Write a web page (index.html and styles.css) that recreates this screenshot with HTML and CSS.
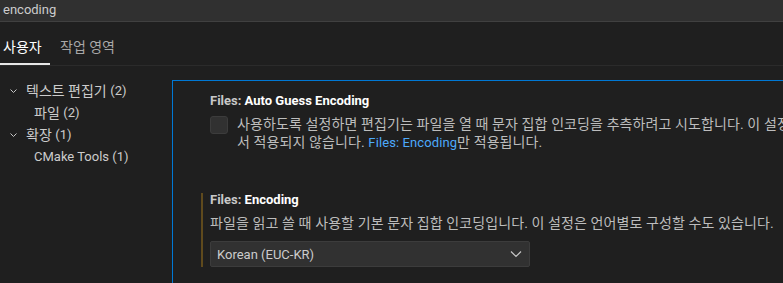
FILE: index.html
```html
<!DOCTYPE html>
<html>
<head>
  <meta charset="utf-8">
  <title>설정</title>
  <link rel="stylesheet" href="styles.css">
</head>
<body>
<div class="search">encoding</div>
<div class="tabs">
  <div class="tab active">사용자</div>
  <div class="tab">작업 영역</div>
</div>
<div class="main">
  <div class="toc">
    <div class="toc-row ko">
      <svg class="chev" width="8" height="6" viewBox="0 0 8 6"><polyline points="0.5,1.5 3.5,4.5 6.5,1.5"/></svg>
      텍스트 편집기&nbsp;<span class="latin">(2)</span>
    </div>
    <div class="toc-row child ko">파일&nbsp;<span class="latin">(2)</span></div>
    <div class="toc-row ko">
      <svg class="chev" width="8" height="6" viewBox="0 0 8 6"><polyline points="0.5,1.5 3.5,4.5 6.5,1.5"/></svg>
      확장&nbsp;<span class="latin">(1)</span>
    </div>
    <div class="toc-row child">CMake Tools (1)</div>
  </div>
  <div class="settings">
    <div class="item">
      <div class="title"><span class="cat">Files: </span>Auto Guess Encoding</div>
      <div class="check-row">
        <div class="checkbox"></div>
        <div class="desc ko">사용하도록 설정하면 편집기는 파일을 열 때 문자 집합 인코딩을 추측하려고 시도합니다. 이 설정은 검색에<br>서 적용되지 않습니다. <span class="link latin">Files: Encoding</span>만 적용됩니다.</div>
      </div>
    </div>
    <div class="item modified">
      <div class="title"><span class="cat">Files: </span>Encoding</div>
      <div class="desc ko">파일을 읽고 쓸 때 사용할 기본 문자 집합 인코딩입니다. 이 설정은 언어별로 구성할 수도 있습니다.</div>
      <div class="select">
        <span>Korean (EUC-KR)</span>
        <svg width="12" height="8" viewBox="0 0 12 8"><polyline points="1,1.5 6,6.5 11,1.5"/></svg>
      </div>
    </div>
  </div>
</div>
</body>
</html>
```

FILE: styles.css
```css
html, body {
  margin: 0;
  height: 100%;
  overflow: hidden;
}
body {
  background: #1f1f1f;
  color: #cccccc;
  font-family: Roboto, "Noto Sans CJK KR", sans-serif;
  font-size: 13px;
}
/* hangul runs a bit larger to match the original glyph widths */
.ko {
  font-size: 14px;
}
.latin {
  font-size: 13px;
}
.search {
  height: 22px;
  line-height: 20px;
  padding-left: 3px;
  background: #303030;
  border-bottom: 1px solid #404040;
  box-sizing: border-box;
  font-size: 13px;
}
.tabs {
  display: flex;
  height: 44px;
  border-bottom: 1px solid #2b2b2b;
  box-sizing: border-box;
}
.tab {
  padding: 8px 0 0 0;
  line-height: 34px;
  color: #a8a8a8;
  font-size: 14px;
  margin-left: 10px;
}
.tab.active {
  color: #ffffff;
  width: 47px;
  padding-left: 3px;
  margin-left: 0;
  box-shadow: inset 0 -2px #e7e7e7;
}
.main {
  display: flex;
  height: 220px;
}
.toc {
  width: 172px;
  padding-top: 14px;
  flex: none;
}
.toc-row {
  height: 22px;
  line-height: 22px;
  padding-left: 10px;
  display: flex;
  align-items: center;
  white-space: nowrap;
}
.toc-row.child {
  padding-left: 34px;
}
.chev {
  margin-right: 8px;
  fill: none;
  stroke: #c5c5c5;
  stroke-width: 1;
}
.settings {
  flex: 1;
  min-width: 0;
  overflow: hidden;
  margin-top: 14px;
  border-top: 1px solid #0078d4;
  border-left: 1px solid #0078d4;
  padding-top: 13px;
  white-space: nowrap;
}
.item {
  margin-left: 28px;
  border-left: 2px solid transparent;
  padding-left: 7px;
}
.item.modified {
  margin-top: 41px;
  border-left-color: #5f4a1d;
}
.title {
  font-weight: 700;
  color: #ffffff;
  line-height: 14px;
}
.cat {
  color: #c8c8c8;
}
.check-row {
  display: flex;
  margin-top: 7px;
}
.checkbox {
  width: 16px;
  height: 16px;
  margin-top: 1px;
  margin-right: 9px;
  background: #313131;
  border: 1px solid #3c3c3c;
  border-radius: 3px;
  flex: none;
}
.desc {
  color: #bdbdbd;
  line-height: 18px;
  letter-spacing: 0.1px;
}
.item.modified .desc {
  margin-top: 7px;
}
.link {
  color: #4daafc;
}
.select {
  margin-top: 9px;
  width: 320px;
  height: 26px;
  box-sizing: border-box;
  background: #313131;
  border: 1px solid #3c3c3c;
  border-radius: 2px;
  display: flex;
  align-items: center;
  justify-content: space-between;
  padding: 0 7px 0 6px;
  color: #cccccc;
}
.select svg {
  fill: none;
  stroke: #c5c5c5;
  stroke-width: 1.2;
}
```
